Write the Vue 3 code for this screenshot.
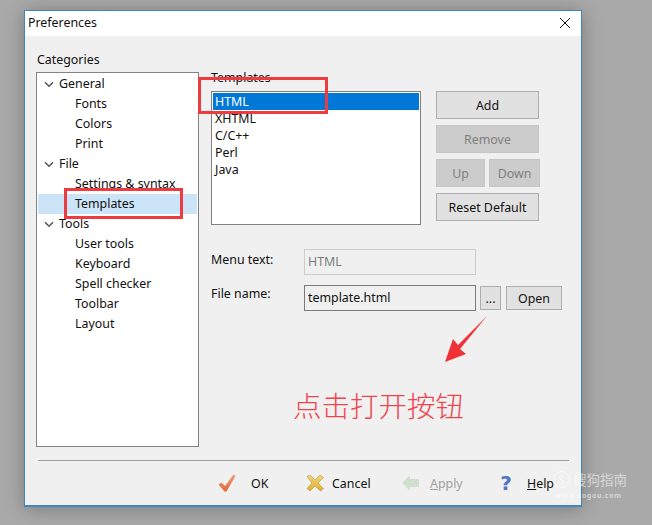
<script setup>
const tree = [
  { label: 'General', level: 0 },
  { label: 'Fonts', level: 1 },
  { label: 'Colors', level: 1 },
  { label: 'Print', level: 1 },
  { label: 'File', level: 0 },
  { label: 'Settings & syntax', level: 1 },
  { label: 'Templates', level: 1, selected: true },
  { label: 'Tools', level: 0 },
  { label: 'User tools', level: 1 },
  { label: 'Keyboard', level: 1 },
  { label: 'Spell checker', level: 1 },
  { label: 'Toolbar', level: 1 },
  { label: 'Layout', level: 1 },
]
const templates = ['HTML', 'XHTML', 'C/C++', 'Perl', 'Java']
</script>

<template>
  <div class="page">
    <div class="window">
      <header class="titlebar">
        <span class="title">Preferences</span>
        <svg class="close" width="12" height="12" viewBox="0 0 12 12"><path d="M1 1L11 11M11 1L1 11" stroke="#111" stroke-width="1" fill="none" /></svg>
      </header>
      <main class="body">
        <section class="left">
          <div class="cat-label">Categories</div>
          <ul class="tree">
            <li v-for="n in tree" :key="n.label" class="node" :class="{ child: n.level === 1, selected: n.selected }">
              <svg v-if="n.level === 0" class="chev" width="10" height="7" viewBox="0 0 10 7"><path d="M1 1.2L5 5.2L9 1.2" stroke="#555" stroke-width="1.5" fill="none" /></svg>
              <span class="node-text">{{ n.label }}</span>
            </li>
          </ul>
        </section>
        <section class="right">
          <div class="tpl-label">Templates</div>
          <div class="tpl-row">
            <ul class="list">
              <li v-for="(t, i) in templates" :key="t" :class="{ on: i === 0 }">{{ t }}</li>
            </ul>
            <div class="btns">
              <button class="btn">Add</button>
              <button class="btn off">Remove</button>
              <div class="pair">
                <button class="btn off up">Up</button>
                <button class="btn off down">Down</button>
              </div>
              <button class="btn">Reset Default</button>
            </div>
          </div>
          <div class="form">
            <label class="flabel">Menu text:</label>
            <div class="input dis">HTML</div>
          </div>
          <div class="form f2">
            <label class="flabel l2">File name:</label>
            <div class="input">template.html</div>
            <button class="btn dots">...</button>
            <button class="btn open">Open</button>
          </div>
        </section>
      </main>
      <div class="sep"></div>
      <footer class="foot">
        <div class="act ok">
          <svg width="20" height="20" viewBox="0 0 20 20">
            <defs>
              <linearGradient id="okg" x1="0" y1="0" x2="0" y2="1"><stop offset="0" stop-color="#eda078" /><stop offset="1" stop-color="#e0693a" /></linearGradient>
            </defs>
            <path d="M1.5 11.5L4.5 9.5L8 13L16.5 1.5L18.5 3L9.5 18.5H7.5Z" fill="url(#okg)" />
          </svg>
          <span>OK</span>
        </div>
        <div class="act cancel">
          <svg width="20" height="20" viewBox="0 0 20 20">
            <defs>
              <linearGradient id="xg" x1="0" y1="0" x2="0" y2="1"><stop offset="0" stop-color="#f3d67a" /><stop offset="1" stop-color="#e5ac2e" /></linearGradient>
            </defs>
            <path d="M2 3.5L5 2L10 7L15 2L18.5 4.5L13 10L18.5 15.5L15.5 18L10 13L5 18L2 15.5L7 10Z" fill="url(#xg)" stroke="#b7a255" stroke-width="0.7" />
          </svg>
          <span>Cancel</span>
        </div>
        <div class="act apply">
          <svg width="20" height="18" viewBox="0 0 20 18"><path d="M1 9L9 1V5H18V13H9V17Z" fill="#cfe0cd" /></svg>
          <span><u>A</u>pply</span>
        </div>
        <div class="act help">
          <span class="q">?</span>
          <span><u>H</u>elp</span>
        </div>
      </footer>
    </div>

    <div class="mark m1"></div>
    <div class="mark m2"></div>
    <svg class="arrow" width="46" height="50" viewBox="0 0 46 50"><path d="M43 0L16 33L22 38L1 46L9 23L14 29Z" fill="#f03236" /></svg>
    <div class="note">点击打开按钮</div>
    <div class="wm">
      <div class="wm-top"><span class="wm-s">S</span><span>搜狗指南</span></div>
      <div class="wm-url">www.sogou.com</div>
    </div>
  </div>
</template>

<style scoped>
.page {
  position: relative;
  width: 652px;
  height: 525px;
  overflow: hidden;
  box-sizing: border-box;
  padding: 10px 0 0 24px;
  background: #a9a9a9;
  font-family: "Noto Sans", "Open Sans", sans-serif;
  font-size: 12.4px;
  color: #111;
}
.window {
  width: 558px;
  height: 497px;
  box-sizing: border-box;
  border: 1px solid #3f86c1;
  border-width: 1px 1px 2px 1px;
  background: #f0f0f0;
  box-shadow: 0 2px 18px rgba(0, 0, 0, 0.28);
  display: flex;
  flex-direction: column;
}
.titlebar {
  height: 25px;
  background: #fff;
  display: flex;
  align-items: center;
  justify-content: space-between;
  padding: 0 10px 2px 3px;
  box-sizing: border-box;
  flex: none;
}
.body {
  display: flex;
  height: 424px;
  flex: none;
  padding-left: 11px;
}
.left { width: 163px; flex: none; }
.cat-label { height: 36px; line-height: 16px; padding: 16px 0 0 1px; box-sizing: border-box; }
ul { list-style: none; margin: 0; padding: 0; }
.tree {
  width: 163px;
  height: 375px;
  box-sizing: border-box;
  border: 1px solid #828282;
  background: #fff;
  padding: 1px 1px 0;
}
.node {
  height: 20px;
  display: flex;
  align-items: center;
  padding-left: 6px;
}
.node-text { margin-bottom: 2px; }
.chev { margin-right: 5px; flex: none; }
.node.child { padding-left: 37px; }
.node.selected { background: #cce4f8; }
.right { margin-left: 12px; flex: 1; }
.tpl-label { height: 16px; padding: 34px 0 5px; line-height: 16px; }
.tpl-row { display: flex; }
.list {
  width: 210px;
  height: 134px;
  box-sizing: border-box;
  border: 1px solid #828282;
  background: #fff;
  padding: 1px;
  line-height: 17px;
  flex: none;
}
.list li { height: 17px; padding-left: 2px; }
.list li.on { background: #0078d7; color: #fff; }
.btns {
  margin-left: 15px;
  width: 103px;
  display: flex;
  flex-direction: column;
  gap: 6px;
}
.btn {
  height: 28px;
  box-sizing: border-box;
  border: 1px solid #adadad;
  background: #e1e1e1;
  font: inherit;
  color: #111;
  padding: 0;
  text-align: center;
  flex: none;
}
.btn.off { background: #cccccc; border-color: #c6c6c6; color: #808080; }
.pair { display: flex; gap: 4px; width: 104px; }
.up { width: 49px; }
.down { width: 51px; }
.form { display: flex; margin-top: 24px; height: 26px; }
.f2 { margin-top: 10px; }
.flabel { width: 93px; flex: none; line-height: 21px; }
.l2 { line-height: 17px; }
.input {
  width: 172px;
  height: 26px;
  box-sizing: border-box;
  border: 1px solid #7a7a7a;
  padding-left: 3px;
  line-height: 23px;
  flex: none;
}
.input.dis { border-color: #ccc; color: #7d7d7d; }
.dots { width: 21px; height: 24px; margin: 1px 0 0 4px; }
.open { width: 56px; height: 24px; margin: 1px 0 0 5px; }
.sep { height: 1px; background: #a0a0a0; margin: 0 12px 0 13px; flex: none; }
.foot { flex: 1; display: flex; padding-left: 192px; }
.act { display: flex; align-items: center; height: 44px; flex: none; }
.ok { width: 88px; }
.ok svg { margin-right: 14px; }
.cancel { width: 96px; }
.cancel svg { margin-right: 7px; }
.apply { width: 93px; color: #a0a0a0; }
.apply svg { margin-right: 9px; }
.help { width: 60px; }
.q { width: 24px; margin-right: 9px; text-align: center; color: #4f74c8; font-family: "DejaVu Sans", sans-serif; font-size: 20px; font-weight: 700; line-height: 22px; }
.mark { position: absolute; border: 3px solid #ee3b40; box-sizing: border-box; }
.m1 { left: 198px; top: 77px; width: 130px; height: 37px; }
.m2 { left: 64px; top: 188px; width: 119px; height: 31px; }
.arrow { position: absolute; left: 444px; top: 316px; }
.note {
  position: absolute;
  left: 293px;
  top: 386px;
  font-family: "Noto Sans CJK SC", sans-serif;
  font-weight: 300;
  font-size: 28.5px;
  line-height: 38px;
  color: #f0444c;
  white-space: nowrap;
}
.wm { position: absolute; left: 553px; top: 468px; color: rgba(255, 255, 255, 0.55); }
.wm-top { display: flex; align-items: center; gap: 3px; font-family: "Noto Sans CJK SC", sans-serif; font-size: 13.5px; line-height: 22px; white-space: nowrap; }
.wm-s { width: 15px; height: 15px; border: 1.5px solid rgba(255, 255, 255, 0.55); border-radius: 50%; font-size: 11px; line-height: 15px; text-align: center; font-family: "Noto Sans", sans-serif; }
.wm-url { font-size: 7px; letter-spacing: 0.7px; font-weight: 700; line-height: 9px; margin: 1px 0 0 2px; white-space: nowrap; }
</style>
